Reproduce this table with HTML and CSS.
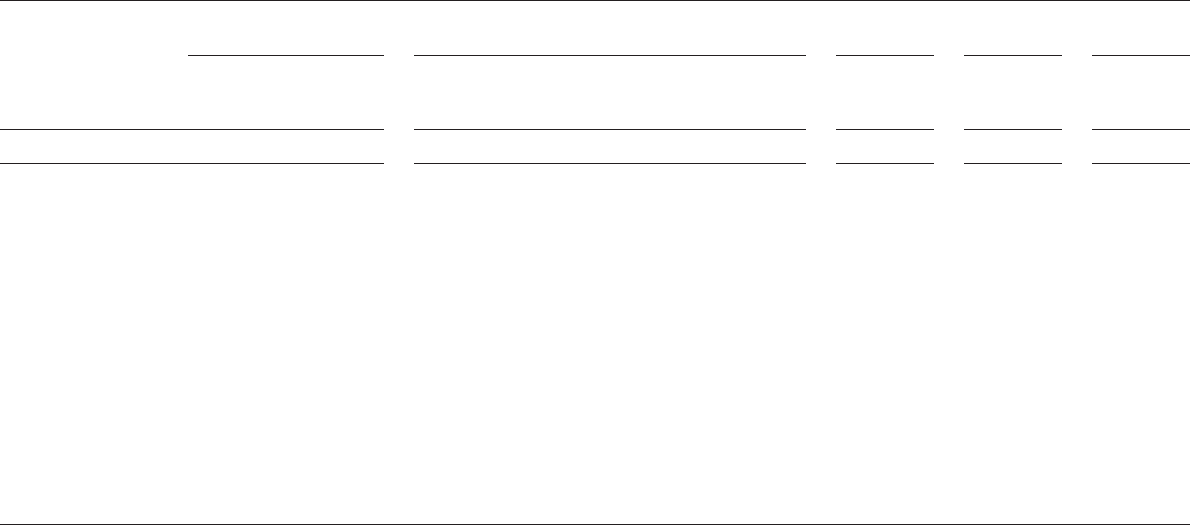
FILE: index.html
```html
<!DOCTYPE html>
<html lang="en">
<head>
<meta charset="utf-8">
<title>Table</title>
<link rel="stylesheet" href="styles.css">
</head>
<body>
<div class="page">
  <div class="table">
    <div class="cell h1 first"></div>
    <div class="cell h1"></div>
    <div class="cell h1"></div>
    <div class="cell h1"></div>
    <div class="cell h1"></div>

    <div class="cell h2"></div>
    <div class="cell h2"></div>
    <div class="cell h2"></div>
    <div class="cell h2"></div>
    <div class="cell h2"></div>

    <div class="cell row"></div>
    <div class="cell row"></div>
    <div class="cell row"></div>
    <div class="cell row"></div>
    <div class="cell row"></div>
  </div>
  <div class="spacer"></div>
</div>
</body>
</html>
```

FILE: styles.css
```css
html, body {
  margin: 0;
  padding: 0;
  background: #ffffff;
  font-family: "Liberation Serif", serif;
  color: #231f20;
}

.page {
  width: 1190px;
  height: 525px;
  box-sizing: border-box;
  border-top: 1px solid #231f20;
  border-bottom: 1px solid #231f20;
  display: flex;
  flex-direction: column;
}

.table {
  display: grid;
  grid-template-columns: 384px 392px 98px 98px 98px;
  column-gap: 30px;
}

.cell {
  box-sizing: border-box;
  border-bottom: 1px solid #231f20;
}

.h1 {
  height: 55px;
}

.h1.first {
  margin-left: 188px;
}

.h2 {
  height: 74px;
}

.row {
  height: 34px;
}

.spacer {
  flex: 1;
}
```
